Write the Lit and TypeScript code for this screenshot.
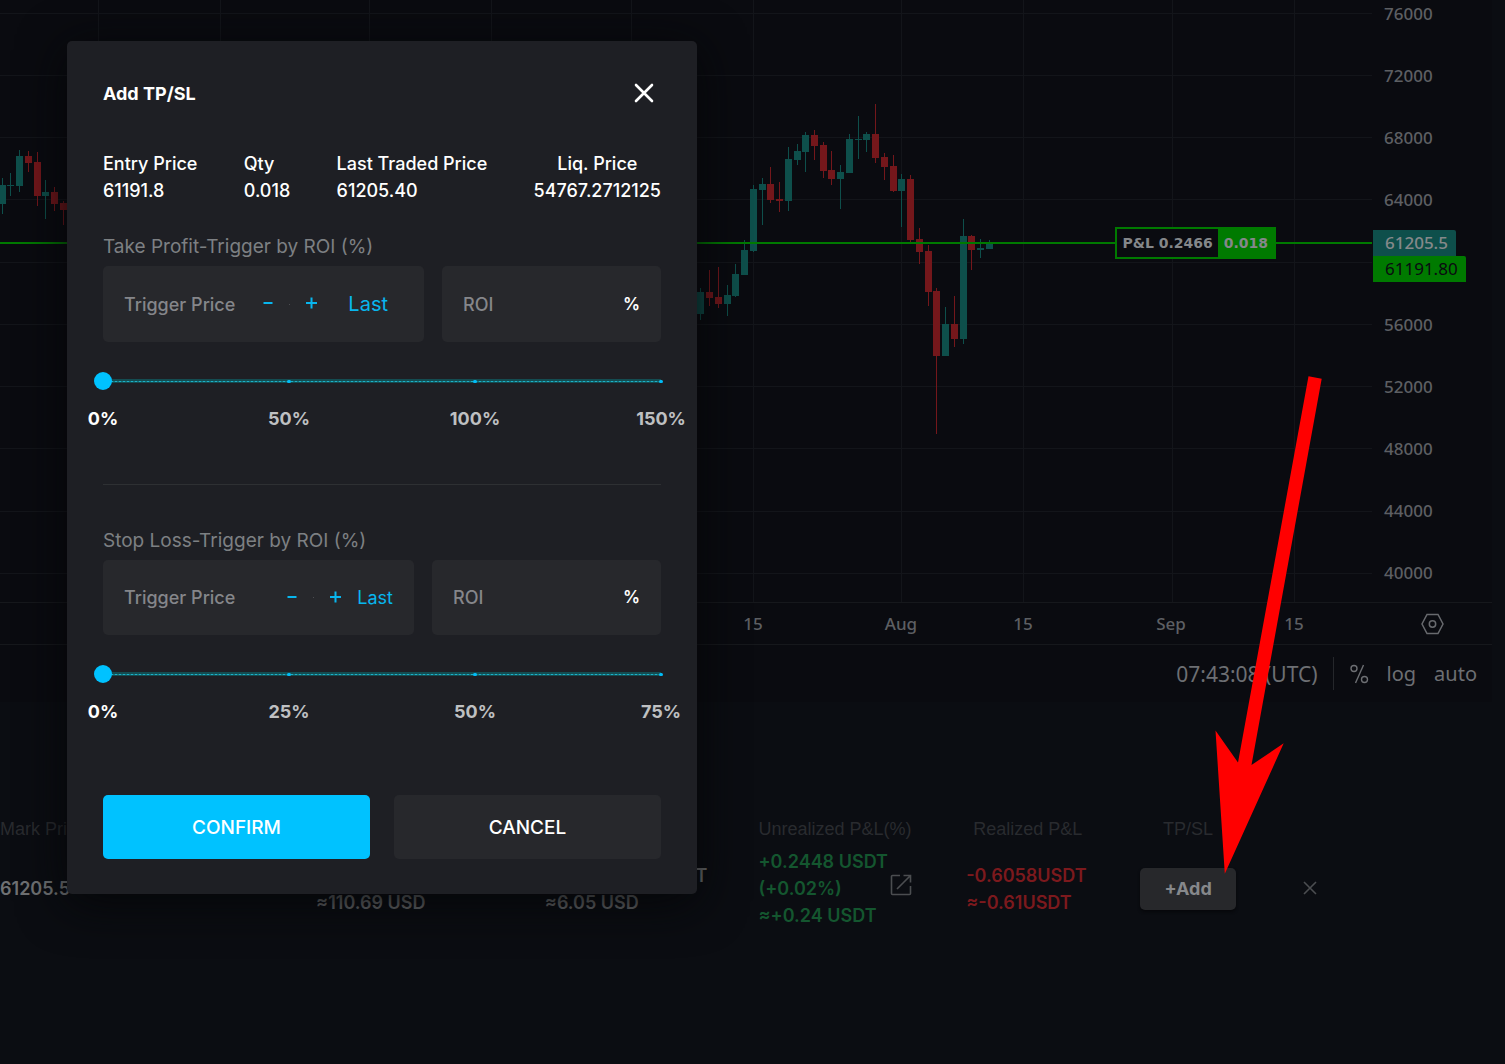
import { LitElement, html, svg, css } from "lit";
import { customElement, property } from "lit/decorators.js";

type Candle = [x: number, top: number, bottom: number, high: number, low: number, up: 0 | 1];

const CANDLES: Candle[] = [
  [-1, 185, 204, 178, 214, 1], [7, 185, 186, 173, 196, 1], [16, 156, 186, 150, 192, 1],
  [25, 156, 163, 151, 172, 0], [34, 162, 196, 152, 206, 0], [42, 192, 196, 180, 219, 1],
  [51, 192, 204, 187, 211, 0], [60, 203, 210, 201, 225, 0], [697, 292, 314, 288, 320, 1],
  [706, 292, 298, 270, 306, 0], [715, 297, 304, 267, 308, 0], [724, 295, 304, 285, 316, 1],
  [732, 274, 296, 264, 297, 1], [741, 250, 275, 240, 275, 1], [750, 189, 251, 185, 252, 1],
  [759, 184, 190, 178, 225, 1], [767, 184, 200, 167, 203, 0], [776, 199, 201, 182, 212, 0],
  [785, 159, 201, 147, 211, 1], [794, 151, 160, 144, 165, 1], [802, 135, 152, 132, 172, 1],
  [811, 135, 146, 130, 160, 0], [820, 145, 171, 142, 178, 0], [828, 170, 179, 151, 185, 0],
  [837, 172, 179, 165, 209, 1], [846, 139, 173, 134, 173, 1], [855, 139, 140, 116, 159, 1],
  [863, 134, 140, 132, 152, 1], [872, 134, 158, 104, 163, 0], [881, 157, 167, 153, 180, 0],
  [890, 166, 191, 155, 192, 0], [898, 179, 191, 174, 227, 1], [907, 179, 240, 175, 242, 0],
  [916, 239, 252, 228, 264, 0], [925, 251, 292, 245, 306, 0], [933, 291, 356, 288, 434, 0],
  [942, 324, 356, 307, 356, 1], [951, 324, 339, 296, 347, 0], [960, 236, 339, 219, 344, 1],
  [968, 236, 250, 235, 270, 0], [977, 248, 250, 239, 258, 1], [986, 243, 249, 240, 249, 1],
];
const GRID_X = [98, 220, 369, 491, 631, 753, 901, 1023, 1172, 1294];
const GRID_Y = [13, 75, 137, 199, 262, 324, 386, 448, 511, 573];
const PRICES = ["76000", "72000", "68000", "64000", "", "56000", "52000", "48000", "44000", "40000"];
/* Label and the share of the time scale that it is centred in. */
const TIMES: [string, number][] = [
  ["", 679], ["15", 148], ["Aug", 148], ["15", 96], ["Sep", 200], ["15", 46], ["", 55],
];

@customElement("price-chart")
class PriceChart extends LitElement {
  static styles = css`
    :host { display: block; background: #0a0b10; color: #5d5f63; margin-right: 13px;
      font: 500 17px/24px "Noto Sans", "Open Sans", sans-serif; }
    .pane { display: flex; border-bottom: 1px solid #16181c; }
    .plot { position: relative; flex: 1; min-width: 0; }
    .plot svg { display: block; width: 100%; height: auto; }
    .grid { fill: #13151a; }
    .up { fill: #0e4f4b; }
    .down { fill: #74171b; }
    .entry { fill: #007a00; }
    .pnl { position: absolute; left: 81.3%; top: 37.7%; display: flex; color: #84878a;
      font: bold 14px/28px "DejaVu Sans", sans-serif; border: 2px solid #007a00; background: #0a0b10; white-space: nowrap; }
    .pnl span { padding: 0 5px; }
    .pnl .qty { background: #007a00; padding: 0 6px; }
    .prices { position: relative; width: 120px; flex: none; box-sizing: border-box; margin: 0;
      padding: 2px 0 17px 12px; list-style: none; display: flex; flex-direction: column; justify-content: space-between; }
    .prices li { height: 24px; }
    .tags { position: absolute; left: 1px; top: 38.2%; display: flex; flex-direction: column; align-items: flex-start; }
    .tag { padding: 0 8px 0 12px; line-height: 26px; border-radius: 0 2px 0 0; }
    .last { background: #0e4f4b; color: #85898a; }
    .mark { background: #007a00; color: #0a0b10; font-weight: 400; }
    .scale { display: flex; height: 41px; border-bottom: 1px solid #16181c; }
    .times { flex: 1; display: flex; min-width: 0; }
    .times span { flex: 1 1 0; display: flex; justify-content: center; align-items: center; }
    .corner { width: 120px; flex: none; display: flex; align-items: center; justify-content: center; }
    button { all: unset; cursor: pointer; }
    .gear svg { display: block; fill: none; stroke: #686a6e; stroke-width: 1.5; }
    .bar { display: flex; justify-content: flex-end; align-items: center; height: 57px; padding-right: 15px;
      font-size: 20px; font-weight: 400; color: #6d6f73; gap: 18px; }
    .bar .clock { font-size: 21px; }
    .bar .rule { width: 1px; height: 33px; background: #25272b; margin: 0 -3px; }
    .pct svg { display: block; fill: none; stroke: #6d6f73; stroke-width: 1.4; }
  `;

  render() {
    return html`
      <div class="pane">
        <div class="plot">
          <svg viewBox="0 0 1372 602" role="img" aria-label="Price chart" shape-rendering="crispEdges">
            ${GRID_X.map((x) => svg`<rect class="grid" x=${x} y="0" width="1" height="602" />`)}
            ${GRID_Y.map((y) => svg`<rect class="grid" x="0" y=${y} width="1373" height="1" />`)}
            ${CANDLES.map(([x, t, b, h, l, up]) => svg`<g class=${up ? "up" : "down"}>
              <rect x=${x + 3} y=${h} width="1" height=${l - h} /><rect x=${x} y=${t} width="7" height=${b - t} /></g>`)}
            <rect class="entry" x="0" y="242" width="1373" height="2" />
          </svg>
          <div class="pnl"><span>P&amp;L 0.2466</span><span class="qty">0.018</span></div>
        </div>
        <ul class="prices">
          ${PRICES.map((p) => html`<li>${p}</li>`)}
          <li class="tags"><span class="tag last">61205.5</span><span class="tag mark">61191.80</span></li>
        </ul>
      </div>
      <div class="scale">
        <div class="times">${TIMES.map(([t, w]) => html`<span style="flex-grow:${w}">${t}</span>`)}</div>
        <div class="corner">
          <button class="gear" aria-label="Scale settings">
            <svg width="24" height="22" viewBox="0 0 24 22"><path d="M7 1.500h11l5 9.500-5 9.500h-11L2 11z" /><circle cx="12.500" cy="11" r="3.200" /></svg>
          </button>
        </div>
      </div>
      <div class="bar">
        <button class="clock">07:43:08 (UTC)</button>
        <span class="rule"></span>
        <button class="pct" aria-label="Percent scale">
          <svg width="20" height="20" viewBox="0 0 20 20"><circle cx="5" cy="4.500" r="3" /><circle cx="15.500" cy="15.500" r="3" /><path d="M14.500 1L6.500 19" /></svg>
        </button>
        <button>log</button>
        <button>auto</button>
      </div>
    `;
  }
}

@customElement("positions-table")
class PositionsTable extends LitElement {
  static styles = css`
    :host { display: block; padding-top: 113px; }
    table { width: 100%; table-layout: fixed; border-collapse: collapse;
      font: 600 18px/27px Inter, sans-serif; color: #6f7173; white-space: nowrap; }
    th { font: 400 18px/28px "Liberation Sans", sans-serif; color: #292b2f; padding: 0 0 5px; text-align: left; }
    td { padding: 0; vertical-align: middle; }
    .c0 { width: 21%; } .c1 { width: 15.200%; } .c2 { width: 10.800%; } .c3 { width: 3.400%; }
    .c4 { width: 10.200%; } .c5 { width: 3.600%; } .c6 { width: 8.200%; } .c7 { width: 3.300%; }
    .c8 { width: 6.500%; } .c9 { width: 3.500%; }
    .end { display: block; text-align: right; }
    .mid { text-align: center; }
    .gain { color: #14562f; }
    .loss { color: #7c191d; }
    .unreal { display: flex; align-items: center; }
    .share { margin: 0 0 8px 2px; }
    button { all: unset; cursor: pointer; }
    .icon svg { display: block; fill: none; stroke: #4b4d50; stroke-width: 1.6; }
    .add { width: 96px; height: 42px; line-height: 42px; border-radius: 5px; background: #27282b;
      color: #86888b; text-align: center; font-weight: 700; box-shadow: 0 2px 3px #07080b; }
  `;

  render() {
    return html`
      <table>
        <colgroup>
          <col class="c0" /><col class="c1" /><col class="c2" /><col class="c3" /><col class="c4" />
          <col class="c5" /><col class="c6" /><col class="c7" /><col class="c8" /><col class="c9" /><col />
        </colgroup>
        <thead>
          <tr>
            <th>Mark Price</th><th></th><th></th><th></th><th colspan="2">Unrealized P&amp;L(%)</th>
            <th class="mid">Realized P&amp;L</th><th></th><th class="mid">TP/SL</th><th></th><th></th>
          </tr>
        </thead>
        <tbody>
          <tr>
            <td>61205.5</td>
            <td><br />≈110.69 USD</td>
            <td><span class="end">USDT</span>≈6.05 USD</td>
            <td></td>
            <td colspan="2">
              <div class="unreal">
                <span class="gain">+0.2448 USDT<br />(+0.02%)<br />≈+0.24 USDT</span>
                <button class="icon share" aria-label="Share position">
                  <svg width="22" height="22" viewBox="0 0 22 22"><path d="M10 1.500H2.500a1 1 0 0 0-1 1v17a1 1 0 0 0 1 1h17a1 1 0 0 0 1-1V12M13.500 1.500h7v7M20.500 1.500L7 15" /></svg>
                </button>
              </div>
            </td>
            <td class="loss">-0.6058USDT<br />≈-0.61USDT</td>
            <td></td>
            <td class="mid"><button class="add">+Add</button></td>
            <td></td>
            <td>
              <button class="icon" aria-label="Close position">
                <svg width="40" height="14" viewBox="0 0 40 14"><path d="M14 1l12 12M26 1L14 13" /></svg>
              </button>
            </td>
          </tr>
        </tbody>
      </table>
    `;
  }
}

@customElement("trigger-section")
class TriggerSection extends LitElement {
  @property() heading = "";
  @property({ type: Array }) stops: string[] = [];
  @property({ type: Boolean, reflect: true }) compact = false;

  static styles = css`
    :host { display: block; }
    .heading { color: #7d8083; line-height: 27px; margin: 0 0 6px; font-size: 19px; font-weight: 400; }
    .fields { display: grid; grid-template-columns: 321fr 219fr; gap: 18px; }
    :host([compact]) .fields { grid-template-columns: 311fr 229fr; }
    .field { display: flex; align-items: center; height: 76px; box-sizing: border-box; padding: 0 21px;
      background: #27282c; border-radius: 5px; min-width: 0; }
    :host([compact]) .field { height: 75px; }
    input[type="text"] { flex: 1; min-width: 0; width: 0; border: 0; padding: 0; background: none; color: #fff;
      font: 500 18px/27px Inter, sans-serif; outline: 0; }
    input::placeholder { color: #85868a; opacity: 1; }
    button { all: unset; cursor: pointer; color: #08b6ee; }
    .step svg { display: block; stroke: #08b6ee; stroke-width: 2; fill: none; }
    .dot { width: 1px; height: 1px; background: #4c4d51; margin: 0 16px; }
    .last { font-size: 20px; font-weight: 400; padding: 0 15px 0 31px; }
    :host([compact]) .last { font-size: 18px; padding: 0 0 0 16px; }
    .unit { color: #fff; font-weight: 600; font-size: 17px; }
    .slider { display: grid; align-items: center; margin-top: 29px; }
    .slider > * { grid-area: 1 / 1; }
    .rail { height: 4px; background: repeating-linear-gradient(90deg, #1cb0c8 0 2px, #157780 2px 4px) 0 2px / 100% 1px no-repeat #144c51;
      display: flex; justify-content: space-between; align-items: center; }
    .rail i { width: 4px; height: 3px; border-radius: 2px; background: #00bdf8; margin: 0 -2px; }
    input[type="range"] { appearance: none; -webkit-appearance: none; background: none; height: 20px; margin: 0 -9px;
      width: calc(100% + 18px); }
    input[type="range"]::-webkit-slider-thumb { -webkit-appearance: none; width: 18px; height: 18px; border-radius: 50%; background: #00c2ff; }
    .stops { display: flex; justify-content: space-between; margin: 14px 0 0; padding: 0; list-style: none; line-height: 27px;
      font-weight: 700; color: #bfc0c2; }
    .stops li { width: 0; display: flex; justify-content: center; }
    .stops li:first-child { color: #fff; }
  `;

  render() {
    return html`
      <h3 class="heading">${this.heading}</h3>
      <div class="fields">
        <div class="field">
          <input type="text" placeholder="Trigger Price" aria-label="Trigger Price" />
          <button class="step" aria-label="Decrease"><svg width="10" height="14" viewBox="0 0 10 14"><path d="M0.500 6h9" /></svg></button>
          <span class="dot"></span>
          <button class="step" aria-label="Increase"><svg width="11" height="14" viewBox="0 0 11 14"><path d="M0 6h11M5.500 0.500v11" /></svg></button>
          <button class="last">Last</button>
        </div>
        <div class="field">
          <input type="text" placeholder="ROI" aria-label="ROI" />
          <span class="unit">%</span>
        </div>
      </div>
      <div class="slider">
        <div class="rail">${this.stops.map(() => html`<i></i>`)}</div>
        <input type="range" min="0" max="100" value="0" aria-label=${this.heading} />
      </div>
      <ul class="stops">${this.stops.map((s) => html`<li>${s}</li>`)}</ul>
    `;
  }
}

@customElement("tpsl-dialog")
class TpslDialog extends LitElement {
  static styles = css`
    :host { display: block; box-sizing: border-box; padding: 36px 36px 35px; border-radius: 5px; background: #1e1f24; color: #fff;
      font: 500 18px/27px Inter, sans-serif; box-shadow: 0 8px 48px #050608; }
    .head { display: flex; justify-content: space-between; align-items: center; height: 32px; padding-right: 7px; }
    h2 { margin: 0; font-size: 18px; font-weight: 700; }
    button { all: unset; cursor: pointer; }
    .close svg { display: block; stroke: #fff; stroke-width: 2.6; stroke-linecap: round; }
    .facts { display: flex; justify-content: space-between; margin: 41px 0 29px; }
    .facts dl { margin: 0; }
    .facts dd { margin: 0; }
    .facts dl:last-child { text-align: center; }
    .rule { height: 0; border: 0; border-top: 1px solid #2e3033; margin: 52px 0 42px; }
    .actions { display: grid; grid-template-columns: 1fr 1fr; gap: 24px; margin-top: 70px; }
    .actions button { height: 64px; border-radius: 5px; text-align: center; background: #27282c; font-size: 19px; }
    .actions .confirm { background: #00c2ff; }
  `;

  render() {
    const facts = [["Entry Price", "61191.8"], ["Qty", "0.018"], ["Last Traded Price", "61205.40"], ["Liq. Price", "54767.2712125"]];
    return html`
      <div class="head">
        <h2>Add TP/SL</h2>
        <button class="close" aria-label="Close"><svg width="20" height="20" viewBox="0 0 20 20"><path d="M2 2l16 16M18 2L2 18" /></svg></button>
      </div>
      <div class="facts">${facts.map(([k, v]) => html`<dl><dt>${k}</dt><dd>${v}</dd></dl>`)}</div>
      <trigger-section heading="Take Profit-Trigger by ROI (%)" .stops=${["0%", "50%", "100%", "150%"]}></trigger-section>
      <hr class="rule" />
      <trigger-section compact heading="Stop Loss-Trigger by ROI (%)" .stops=${["0%", "25%", "50%", "75%"]}></trigger-section>
      <div class="actions">
        <button class="confirm">CONFIRM</button>
        <button>CANCEL</button>
      </div>
    `;
  }
}

@customElement("app-root")
class AppRoot extends LitElement {
  static styles = css`
    :host { display: block; position: relative; min-height: 100vh; background: #0b0d12; overflow: hidden; }
    .dialog { position: absolute; left: 67px; top: 41px; width: 630px; }
    .pointer { position: absolute; left: 1215px; top: 376px; fill: #f00; pointer-events: none; }
  `;

  render() {
    return html`
      <price-chart></price-chart>
      <positions-table></positions-table>
      <tpsl-dialog class="dialog" role="dialog" aria-label="Add TP/SL"></tpsl-dialog>
      <svg class="pointer" width="108" height="498" viewBox="0 0 108 498" aria-hidden="true">
        <path d="M93.500 0.300L106.700 2.700L36.500 389L68.700 367.300L9.800 497.700L0.500 354.500L23 386.500Z" />
      </svg>
    `;
  }
}
